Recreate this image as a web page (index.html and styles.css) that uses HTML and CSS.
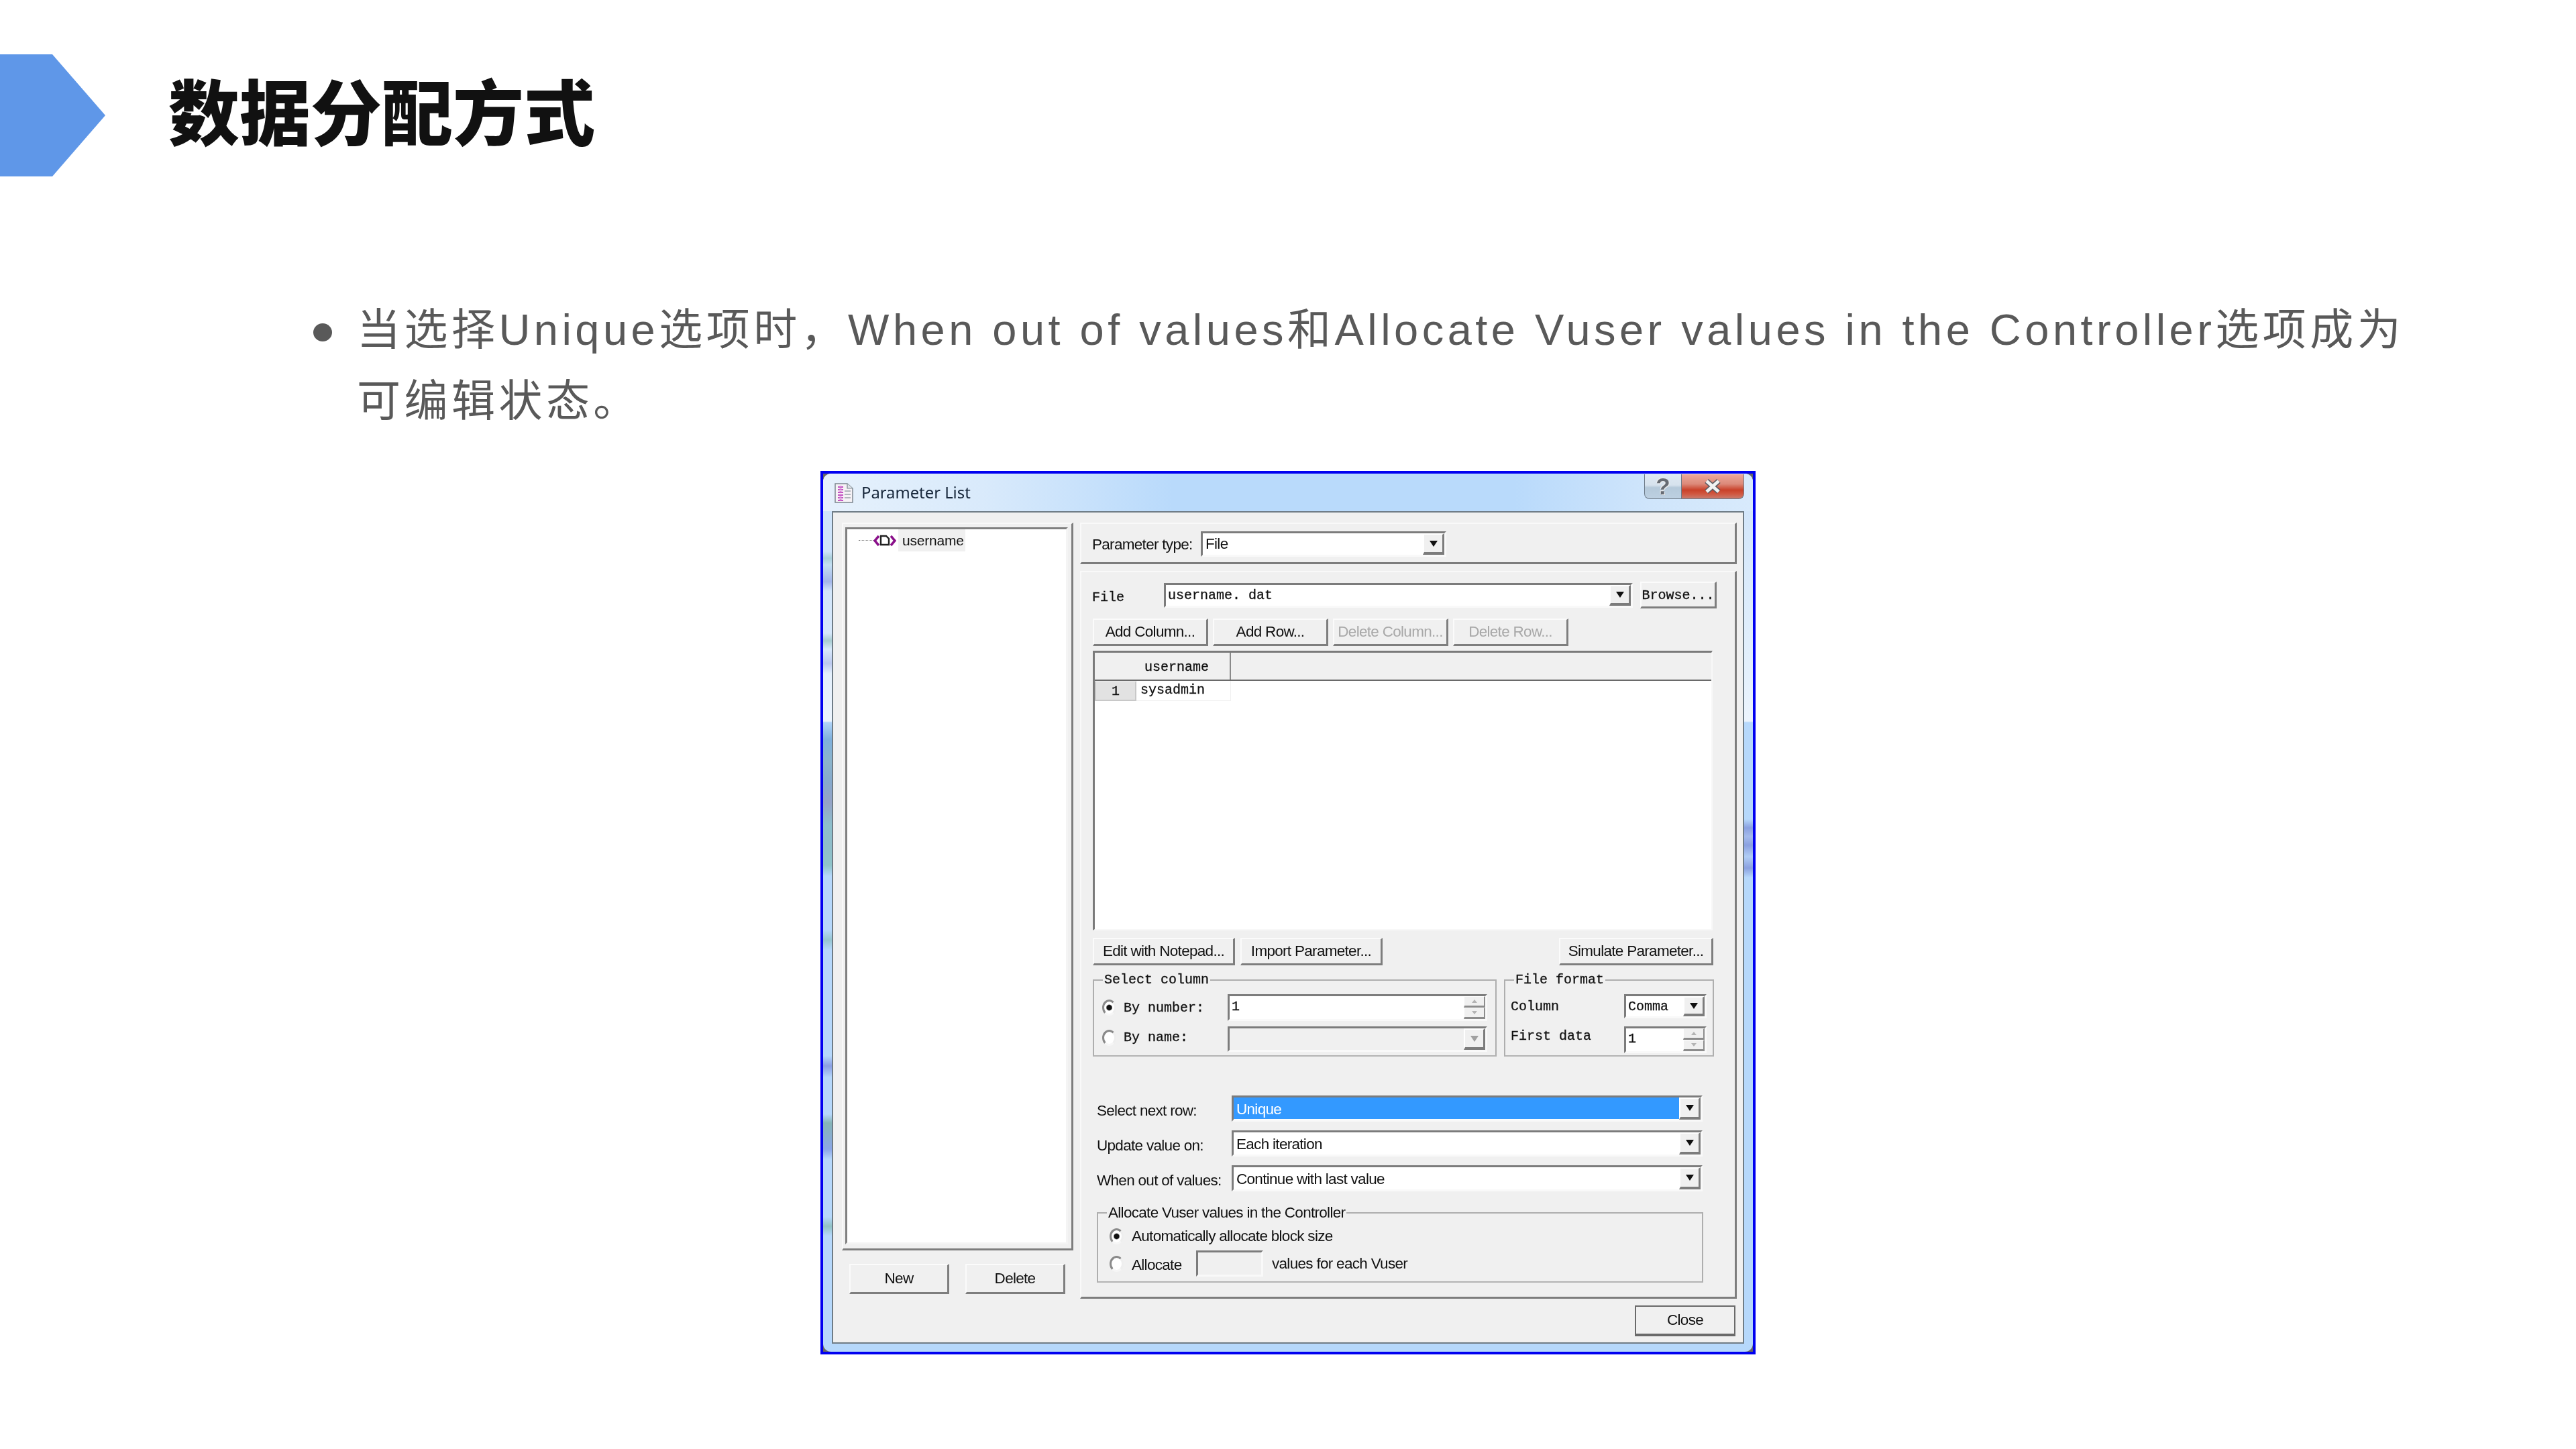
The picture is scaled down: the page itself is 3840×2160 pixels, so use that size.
FILE: index.html
```html
<!DOCTYPE html>
<html>
<head>
    <title>数据分配方式</title>
    <link rel="stylesheet" href="styles.css">
</head>
<body>
    <div class="slide">
        <div class="slideHeader">
            <div class="chevron"></div>
            <h1>数据分配方式</h1>
        </div>
        <div class="bulletRow">
            <span class="bullet"></span>
            <p>当选择Unique选项时，When out of values和Allocate Vuser values in the Controller选项成为可编辑状态。</p>
        </div>

        <div class="window">
            <div class="glass">
                <div class="titleBar">
                    <svg class="docIcon" width="28" height="31" viewBox="0 0 28 31">
                        <path d="M1 2 H19 L27 9 V30 H1 Z" fill="#f6f2f6" stroke="#7d8790" stroke-width="1.5"/>
                        <path d="M19 2 V9 H27" fill="#dfe3e8" stroke="#7d8790" stroke-width="1.2"/>
                        <path d="M5 7 H13 M5 11 H13 M5 15 H13 M5 19 H13 M5 23 H13 M5 27 H13" stroke="#c04fc0" stroke-width="2"/>
                        <path d="M9 5 V28" stroke="#d98ad9" stroke-width="3" stroke-dasharray="2 2"/>
                        <path d="M15 13 H24 M15 18 H24 M15 23 H24" stroke="#9aa3ab" stroke-width="1.5"/>
                    </svg>
                    <span class="titleText">Parameter List</span>
                    <div class="captionButtons">
                        <div class="captionHelp">?</div>
                        <div class="captionClose">
                            <svg width="32" height="24" viewBox="0 0 32 24">
                                <path d="M7 4 L25 20 M25 4 L7 20" stroke="#5b5b62" stroke-width="8"/>
                                <path d="M7 4 L25 20 M25 4 L7 20" stroke="#f2f2f2" stroke-width="5"/>
                            </svg>
                        </div>
                    </div>
                </div>

                <div class="client">
                    <div class="leftCol">
                        <div class="treeOuter">
                            <div class="treeInner">
                                <div class="treeItem">
                                    <span class="treeDots"></span>
                                    <svg class="treeIcon" width="34" height="20" viewBox="0 0 34 20">
                                        <path d="M8 3 L2 10 L8 17 M26 3 L32 10 L26 17" fill="none" stroke="#8a0f8a" stroke-width="3.5"/>
                                        <path d="M11 3 H19 L23 7 V16 H11 Z" fill="#fff" stroke="#222" stroke-width="2.4"/>
                                    </svg>
                                    <span class="treeLabel">username</span>
                                </div>
                            </div>
                        </div>
                        <div class="leftButtons">
                            <div class="btn btnWide">New</div>
                            <div class="btn btnWide">Delete</div>
                        </div>
                    </div>

                    <div class="rightCol">
                        <div class="panel typePanel">
                            <span class="ui typeLabel">Parameter type:</span>
                            <div class="field typeCombo">
                                <span class="ui fieldText">File</span>
                                <span class="comboBtn"></span>
                            </div>
                        </div>

                        <div class="panel filePanel">
                            <div class="fileRow">
                                <span class="mono fileLabel">File</span>
                                <div class="field fileCombo">
                                    <span class="mono fieldText">username. dat</span>
                                    <span class="comboBtn"></span>
                                </div>
                                <div class="btn mono browseBtn">Browse...</div>
                            </div>

                            <div class="gridButtons">
                                <div class="btn gridBtn">Add Column...</div>
                                <div class="btn gridBtn">Add Row...</div>
                                <div class="btn gridBtn disabled">Delete Column...</div>
                                <div class="btn gridBtn disabled">Delete Row...</div>
                            </div>

                            <div class="grid">
                                <div class="gridHead">
                                    <div class="mono headCell">username</div>
                                </div>
                                <div class="gridLine">
                                    <div class="mono rowNum">1</div>
                                    <div class="mono rowCell">sysadmin</div>
                                </div>
                            </div>

                            <div class="actionRow">
                                <div class="btn editBtn">Edit with Notepad...</div>
                                <div class="btn editBtn">Import Parameter...</div>
                                <div class="btn simBtn">Simulate Parameter...</div>
                            </div>

                            <div class="groupRow">
                                <div class="group selectGroup">
                                    <div class="mono legend">Select column</div>
                                    <div class="selectLine">
                                        <span class="radio on"></span>
                                        <span class="mono radioLabel">By number:</span>
                                        <div class="field numField">
                                            <span class="mono fieldText">1</span>
                                            <span class="spin"><i class="spinUp"></i><i class="spinDown"></i></span>
                                        </div>
                                    </div>
                                    <div class="selectLine lineTwo">
                                        <span class="radio"></span>
                                        <span class="mono radioLabel">By name:</span>
                                        <div class="field numField off">
                                            <span class="fieldText"></span>
                                            <span class="comboBtn grey"></span>
                                        </div>
                                    </div>
                                </div>
                                <div class="group formatGroup">
                                    <div class="mono legend">File format</div>
                                    <div class="formatLine">
                                        <span class="mono formatLabel">Column</span>
                                        <div class="field formatField">
                                            <span class="mono fieldText">Comma</span>
                                            <span class="comboBtn"></span>
                                        </div>
                                    </div>
                                    <div class="formatLine lineSecond">
                                        <span class="mono formatLabel">First data</span>
                                        <div class="field formatField">
                                            <span class="mono fieldText">1</span>
                                            <span class="spin"><i class="spinUp"></i><i class="spinDown"></i></span>
                                        </div>
                                    </div>
                                </div>
                            </div>

                            <div class="optionRows">
                                <div class="optionRow">
                                    <span class="ui optionLabel">Select next row:</span>
                                    <div class="field optionField">
                                        <span class="ui fieldText selected">Unique</span>
                                        <span class="comboBtn"></span>
                                    </div>
                                </div>
                                <div class="optionRow">
                                    <span class="ui optionLabel">Update value on:</span>
                                    <div class="field optionField">
                                        <span class="ui fieldText">Each iteration</span>
                                        <span class="comboBtn"></span>
                                    </div>
                                </div>
                                <div class="optionRow">
                                    <span class="ui optionLabel">When out of values:</span>
                                    <div class="field optionField">
                                        <span class="ui fieldText">Continue with last value</span>
                                        <span class="comboBtn"></span>
                                    </div>
                                </div>
                            </div>

                            <div class="group allocGroup">
                                <div class="ui legend">Allocate Vuser values in the Controller</div>
                                <div class="allocLine">
                                    <span class="radio on"></span>
                                    <span class="ui">Automatically allocate block size</span>
                                </div>
                                <div class="allocLine allocSecond">
                                    <span class="radio"></span>
                                    <span class="ui allocWord">Allocate</span>
                                    <div class="field allocField"></div>
                                    <span class="ui">values for each Vuser</span>
                                </div>
                            </div>
                        </div>

                        <div class="btn closeBtn">Close</div>
                    </div>
                </div>
            </div>
        </div>
    </div>
</body>
</html>
```

FILE: styles.css
```css
body, html {
    margin: 0;
    padding: 0;
    background-color: #fff;
}
.slide {
    width: 3840px;
    height: 2160px;
    overflow: hidden;
    font-family: "Liberation Sans", "Noto Sans CJK SC", sans-serif;
}

/* slide header */
.slideHeader {
    display: flex;
    align-items: center;
    padding-top: 81px;
    height: 182px;
}
.chevron {
    width: 157px;
    height: 182px;
    background-color: #5f97e8;
    clip-path: polygon(0 0, 78px 0, 100% 50%, 78px 100%, 0 100%);
}
h1 {
    margin: -20px 0 0 94px;
    font-family: "Noto Sans CJK SC", sans-serif;
    font-size: 106px;
    font-weight: 900;
    line-height: 130px;
    color: #111;
}

/* bullet text */
.bulletRow {
    display: flex;
    margin-top: 176px;
    padding-left: 467px;
    color: #595959;
}
.bullet {
    width: 28px;
    height: 27px;
    margin: 43px 37px 0 0;
    border-radius: 50%;
    background-color: #595959;
}
.bulletRow p {
    width: 3073px;
    margin: 0;
    font-size: 65px;
    line-height: 106px;
    letter-spacing: 5.47px;
}

/* window */
.window {
    box-sizing: border-box;
    width: 1394px;
    height: 1317px;
    margin: 51px auto 0;
    border: 4px solid #0000f0;
    background-color: #666;
}
.glass {
    box-sizing: border-box;
    height: 100%;
    padding: 0 13px 12px;
    border-radius: 12px;
    filter: blur(0.5px);
    background-color: #b6d8fb;
    background-repeat: no-repeat;
    background-size: 13px 100%, 13px 100%;
    background-position: left top, right top;
    background-image:
        linear-gradient(to bottom,
            #cfe4fa 0, #cfe4fa 116px, #a9cfd9 126px, #c4dff2 136px, #a4b6e8 161px, #d3e6fa 175px,
            #d6e8fb 238px, #a8ccd0 249px, #d9eafb 262px, #bcc9ee 283px, #e4f0fc 298px, #ecf4fd 369px,
            #b0d4f8 371px, #7fb0dc 396px, #8bb4cb 430px, #86a9cc 460px, #95a3c6 490px, #8dbfcb 524px,
            #8fbdc9 554px, #8fc4c9 584px, #b6d8fb 600px, #b6d8fb 680px, #96c6d0 695px, #b6d8fb 710px,
            #b6d8fb 868px, #8a9fe2 883px, #b6d8fb 900px, #b6d8fb 955px, #85b4b6 968px, #8ba6e6 1007px,
            #b6d8fb 1022px, #b6d8fb 1108px, #91c2c4 1122px, #b6d8fb 1136px),
        linear-gradient(to bottom,
            #cfe4fa 0, #e4f0fc 300px, #ecf4fd 369px, #b6d8fb 371px, #b6d8fb 515px, #8aa0e0 528px,
            #a4bbec 541px, #8aa0e0 554px, #b0cdf5 571px, #8aa0e0 588px, #b6d8fb 602px);
}
.titleBar {
    display: flex;
    align-items: flex-start;
    height: 56px;
    margin: 0 -13px;
    padding-left: 17px;
    border-radius: 12px 12px 0 0;
    background-image: linear-gradient(to right, #e6f1fc 0, #d9eafb 240px, #b9dafb 520px, #b9dafb 1030px, #cfe5fb 1230px, #d8eafc 100%);
}
.docIcon {
    margin-top: 13px;
}
.titleText {
    margin: 13px 0 0 12px;
    font-family: "Noto Sans", sans-serif;
    font-size: 23.8px;
    line-height: 30px;
    color: #16263a;
}
.captionButtons {
    display: flex;
    margin: 1px 0 0 auto;
    padding-right: 13px;
}
.captionHelp, .captionClose {
    display: flex;
    align-items: center;
    justify-content: center;
    box-sizing: border-box;
    height: 37px;
    border: 1px solid #6d7a88;
    border-top: 0;
}
.captionHelp {
    width: 55px;
    border-radius: 0 0 0 8px;
    border-right: 0;
    font-family: "Liberation Sans", sans-serif;
    font-size: 35px;
    font-weight: bold;
    color: #666b73;
    text-shadow: 1px 1px 0 #eee, -1px -1px 0 #eee;
    background-image: linear-gradient(to bottom, #dfe9f3 0, #d6e2ed 45%, #b5c9da 55%, #bdd0e1 100%);
}
.captionClose {
    width: 94px;
    border-radius: 0 0 8px 0;
    background-image: linear-gradient(to bottom, #eda99b 0, #dc8a7a 40%, #c9412a 65%, #d0553e 80%, #c97a6c 100%);
}
.client {
    box-sizing: border-box;
    display: flex;
    gap: 10px;
    height: 1241px;
    padding: 15px 0 0 13px;
    border: 2px solid #6f7c86;
    background-color: #f0f0f0;
}

/* shared controls */
.ui {
    font-size: 22.5px;
    letter-spacing: -0.7px;
    color: #111;
    white-space: nowrap;
}
.mono {
    font-family: "Liberation Mono", monospace;
    font-size: 20px;
    color: #111;
    -webkit-text-stroke: 0.3px #111;
    white-space: nowrap;
}
.btn {
    box-sizing: border-box;
    display: flex;
    align-items: center;
    justify-content: center;
    border-top: 2px solid #fbfbfb;
    border-left: 2px solid #fbfbfb;
    border-right: 3px solid #7e7e7e;
    border-bottom: 3px solid #7e7e7e;
    background-color: #f0f0f0;
    font-size: 22.5px;
    letter-spacing: -0.7px;
    color: #111;
    white-space: nowrap;
}
.btn.mono {
    font-size: 20px;
    letter-spacing: 0;
}
.disabled {
    color: #a8a8a8;
}
.field {
    box-sizing: border-box;
    display: flex;
    border-top: 3px solid #7c7c7c;
    border-left: 3px solid #7c7c7c;
    border-right: 3px solid #f9f9f9;
    border-bottom: 3px solid #f9f9f9;
    background-color: #fff;
}
.fieldText {
    flex: 1;
    align-self: stretch;
    padding-left: 3px;
    line-height: 32px;
}
.fieldText.ui {
    padding-left: 4px;
}
.comboBtn {
    box-sizing: border-box;
    display: flex;
    align-items: center;
    justify-content: center;
    flex: none;
    width: 32px;
    border-top: 2px solid #fff;
    border-left: 2px solid #fff;
    border-right: 3px solid #7c7c7c;
    border-bottom: 4px solid #7c7c7c;
    background-color: #f0f0f0;
}
.comboBtn::before {
    content: "";
    border-top: 9px solid #111;
    border-left: 6px solid transparent;
    border-right: 6px solid transparent;
}
.comboBtn.grey::before {
    border-top-color: #a0a0a0;
}
.spin {
    display: flex;
    flex-direction: column;
    flex: none;
    width: 32px;
}
.spin i {
    box-sizing: border-box;
    display: flex;
    align-items: center;
    justify-content: center;
    flex: 1;
    border-top: 1px solid #fff;
    border-left: 1px solid #fff;
    border-right: 2px solid #8c8c8c;
    border-bottom: 3px solid #8c8c8c;
    background-color: #f0f0f0;
}
.spinUp::before, .spinDown::before {
    content: "";
    border-left: 4px solid transparent;
    border-right: 4px solid transparent;
}
.spinUp::before {
    border-bottom: 5px solid #b4b4b4;
}
.spinDown::before {
    border-top: 5px solid #b4b4b4;
}
.radio {
    box-sizing: border-box;
    flex: none;
    width: 21px;
    height: 24px;
    border: 3px solid;
    border-color: #8a8a8a #eee #f6f6f6 #8a8a8a;
    border-radius: 50%;
    background-color: #fff;
}
.radio.on {
    background-image: radial-gradient(circle, #111 3.5px, #fff 5px);
}
.group {
    box-sizing: border-box;
    border: 2px solid #aeaeae;
    border-bottom-color: #b4b4b4;
}
.legend {
    width: fit-content;
    height: 24px;
    margin: -13px 0 9px 13px;
    padding: 0 2px;
    line-height: 24px;
    background-color: #f0f0f0;
}

/* left column */
.leftCol {
    flex: none;
    width: 345px;
}
.treeOuter {
    box-sizing: border-box;
    height: 1085px;
    padding: 5px 5px 6px 3px;
    border-top: 2px solid #f9f9f9;
    border-left: 2px solid #f9f9f9;
    border-right: 3px solid #7d7d7d;
    border-bottom: 3px solid #7d7d7d;
}
.treeInner {
    box-sizing: border-box;
    height: 100%;
    padding: 0 0 0 17px;
    border-top: 3px solid #808080;
    border-left: 3px solid #808080;
    border-right: 3px solid #f4f4f4;
    border-bottom: 3px solid #f4f4f4;
    background-color: #fff;
}
.treeItem {
    display: flex;
    align-items: center;
    height: 33px;
}
.treeDots {
    width: 22px;
    border-top: 1px dotted #777;
}
.treeIcon {
    flex: none;
}
.treeLabel {
    width: 94px;
    margin-left: 3px;
    padding-left: 6px;
    font-size: 21px;
    line-height: 33px;
    letter-spacing: -0.2px;
    color: #111;
    background-color: #f0f0f0;
}
.leftButtons {
    display: flex;
    gap: 24px;
    margin: 20px 0 0 11px;
}
.btnWide {
    width: 149px;
    height: 45px;
}

/* right column */
.rightCol {
    display: flex;
    flex-direction: column;
    flex: none;
    width: 979px;
}
.panel {
    box-sizing: border-box;
    border-top: 2px solid #f9f9f9;
    border-left: 2px solid #f9f9f9;
    border-right: 3px solid #7d7d7d;
    border-bottom: 3px solid #7d7d7d;
}
.typePanel {
    display: flex;
    align-items: center;
    height: 62px;
    padding: 3px 0 0 16px;
}
.typeLabel {
    width: 162px;
    padding-top: 2px;
}
.typeCombo {
    width: 366px;
    height: 38px;
}
.filePanel {
    height: 1085px;
    margin-top: 10px;
}
.fileRow {
    display: flex;
    align-items: center;
    gap: 11px;
    height: 40px;
    margin-top: 14px;
    padding-left: 16px;
}
.fileLabel {
    width: 96px;
    padding-top: 6px;
}
.fileCombo {
    width: 699px;
    height: 37px;
}
.browseBtn {
    width: 114px;
    height: 40px;
    padding-top: 2px;
}
.gridButtons {
    display: flex;
    gap: 7px;
    margin: 15px 0 0 17px;
}
.gridBtn {
    width: 172px;
    height: 41px;
}
.grid {
    box-sizing: border-box;
    width: 924px;
    height: 417px;
    margin: 7px 0 0 17px;
    border-top: 3px solid #7a7a7a;
    border-left: 3px solid #7a7a7a;
    border-right: 2px solid #f8f8f8;
    border-bottom: 2px solid #f8f8f8;
    background-color: #fff;
}
.gridHead {
    height: 40px;
    border-bottom: 2px solid #6a6a6a;
    background-color: #f0f0f0;
}
.headCell {
    box-sizing: border-box;
    width: 203px;
    height: 100%;
    padding-right: 31px;
    border-right: 2px solid #8a8a8a;
    line-height: 44px;
    text-align: right;
}
.gridLine {
    display: flex;
    height: 30px;
    line-height: 28px;
}
.rowNum {
    box-sizing: border-box;
    width: 62px;
    border: 2px solid #c8c8c8;
    border-top-color: #e8e8e8;
    background-color: #e2e2e2;
    text-align: center;
}
.rowCell {
    box-sizing: border-box;
    width: 141px;
    padding-left: 6px;
    border-right: 1px solid #f0f0f0;
    border-bottom: 1px solid #f0f0f0;
}
.actionRow {
    display: flex;
    gap: 8px;
    width: 925px;
    margin: 11px 0 0 17px;
}
.editBtn {
    width: 212px;
    height: 41px;
}
.simBtn {
    width: 230px;
    height: 41px;
    margin-left: auto;
}
.groupRow {
    display: flex;
    gap: 11px;
    margin: 21px 0 0 17px;
}
.selectGroup {
    width: 602px;
    height: 115px;
}
.formatGroup {
    width: 313px;
    height: 115px;
}
.selectLine {
    display: flex;
    align-items: center;
    height: 40px;
    padding-left: 12px;
}
.lineTwo {
    height: 38px;
    margin-top: 8px;
}
.lineTwo .radio, .lineTwo .radioLabel {
    margin-top: -5px;
}
.radioLabel {
    width: 155px;
    margin-left: 11px;
}
.numField {
    width: 387px;
    height: 100%;
}
.off {
    background-color: #f0f0f0;
}
.formatLine {
    display: flex;
    align-items: center;
    height: 36px;
    padding-left: 8px;
}
.lineSecond {
    height: 40px;
    margin-top: 12px;
}
.lineSecond .formatLabel {
    margin-top: -12px;
}
.formatLabel {
    width: 169px;
}
.formatField {
    width: 123px;
    height: 100%;
}
.optionRows {
    display: flex;
    flex-direction: column;
    gap: 13px;
    margin: 58px 0 0 23px;
}
.optionRow {
    display: flex;
    align-items: center;
    height: 39px;
}
.optionRow .fieldText {
    line-height: 36px;
}
.optionLabel {
    width: 201px;
    padding-top: 7px;
}
.optionField {
    width: 702px;
    height: 100%;
}
.selected {
    color: #fff;
    background-color: #3399ff;
    margin-bottom: 1px;
}
.allocGroup {
    width: 904px;
    height: 105px;
    margin: 31px 0 0 23px;
}
.allocGroup .legend {
    margin-bottom: 10px;
}
.allocLine {
    display: flex;
    align-items: center;
    gap: 12px;
    height: 26px;
    padding-left: 17px;
}
.allocSecond {
    height: 39px;
    margin-top: 8px;
}
.allocWord {
    width: 84px;
    padding-top: 5px;
}
.allocField {
    width: 100px;
    height: 100%;
    margin-right: 1px;
    background-color: #f0f0f0;
}
.closeBtn {
    align-self: flex-end;
    width: 150px;
    height: 46px;
    margin: 10px 2px 0 0;
    border: 2px solid #6a6a6a;
    border-bottom-width: 4px;
}
```
